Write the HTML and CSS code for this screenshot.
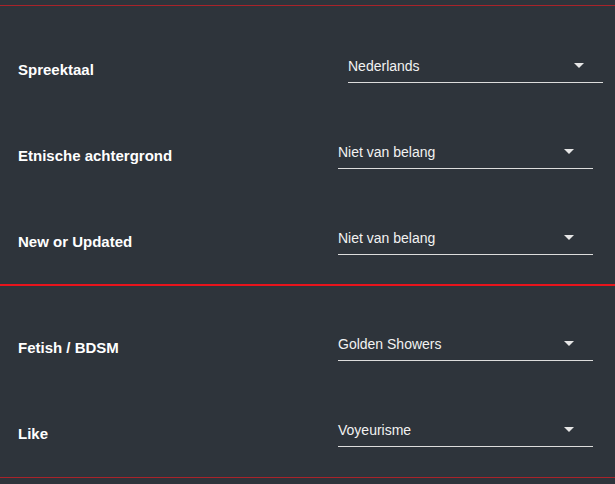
FILE: index.html
```html
<!DOCTYPE html>
<html lang="nl">
<head>
  <meta charset="UTF-8">
  <meta name="viewport" content="width=device-width, initial-scale=1.0">
  <title>Voorkeuren</title>
  <link rel="stylesheet" href="styles.css">
</head>
<body>
  <div class="page">
    <section class="group group-first">
      <div class="row">
        <label class="label">Spreektaal</label>
        <div class="select select-wide">
          <span>Nederlands</span>
          <span class="caret"></span>
        </div>
      </div>
      <div class="row">
        <label class="label">Etnische achtergrond</label>
        <div class="select">
          <span>Niet van belang</span>
          <span class="caret"></span>
        </div>
      </div>
      <div class="row">
        <label class="label">New or Updated</label>
        <div class="select">
          <span>Niet van belang</span>
          <span class="caret"></span>
        </div>
      </div>
    </section>
    <section class="group group-second">
      <div class="row">
        <label class="label">Fetish / BDSM</label>
        <div class="select">
          <span>Golden Showers</span>
          <span class="caret"></span>
        </div>
      </div>
      <div class="row">
        <label class="label">Like</label>
        <div class="select">
          <span>Voyeurisme</span>
          <span class="caret"></span>
        </div>
      </div>
    </section>
  </div>
</body>
</html>
```

FILE: styles.css
```css
body { margin: 0; padding: 0; background: #2e343b; font-family: "Liberation Sans", Arial, sans-serif; color: #fff; }
.page { padding-top: 5px; height: 479px; overflow: hidden; }
.group-first { border-top: 1px solid #a8232a; padding-top: 20px; }
.group-second { border-top: 2px solid #e8141c; border-bottom: 1px solid #a8232a; padding: 18px 0 1px; }
.row { display: flex; align-items: center; height: 86px; padding-left: 18px; }
.label { width: 320px; font-size: 15px; font-weight: bold; }
.select { width: 255px; display: flex; justify-content: space-between; align-items: center; padding: 2px 0 8px; line-height: 16px; font-size: 14px; color: #f2f2f2; border-bottom: 1px solid #dcdcdc; }
.select-wide { margin-left: 10px; }
.caret { width: 0; height: 0; margin-right: 19px; border-left: 5px solid transparent; border-right: 5px solid transparent; border-top: 5px solid #e6e6e6; }
```
